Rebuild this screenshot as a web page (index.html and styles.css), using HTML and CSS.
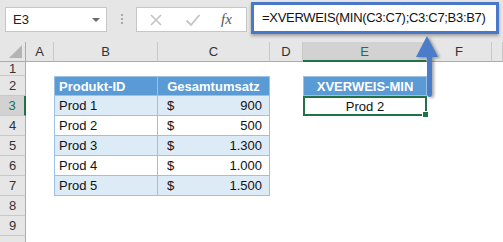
FILE: index.html
```html
<!DOCTYPE html>
<html lang="de">
<head>
  <meta charset="UTF-8">
  <title>XVERWEIS-MIN</title>
  <link rel="stylesheet" href="styles.css">
</head>
<body>
  <div class="app">
    <div class="toolbar">
      <div class="namebox">
        <span>E3</span>
        <span class="caret"></span>
      </div>
      <div class="dots"><i></i><i></i><i></i></div>
      <div class="buttons">
        <svg class="btn" width="14" height="14" viewBox="0 0 14 14">
          <path d="M2 2 L12 12 M12 2 L2 12" stroke="#c4c4c4" stroke-width="1.6" fill="none"/>
        </svg>
        <svg class="btn" width="16" height="14" viewBox="0 0 16 14">
          <path d="M1.5 7.5 L6 12 L14.5 2" stroke="#c4c4c4" stroke-width="1.8" fill="none"/>
        </svg>
        <span class="fx">fx</span>
      </div>
      <div class="formula">=XVERWEIS(MIN(C3:C7);C3:C7;B3:B7)</div>
    </div>

    <div class="sheet">
      <div class="hd corner">
        <svg width="13" height="13" viewBox="0 0 13 13"><path d="M13 0 L13 13 L0 13 Z" fill="#b4b4b4"/></svg>
      </div>
      <div class="hd">A</div>
      <div class="hd">B</div>
      <div class="hd">C</div>
      <div class="hd">D</div>
      <div class="hd sel">E</div>
      <div class="hd">F</div>
      <div class="hd"></div>

      <div class="rh">1</div>
      <div></div><div></div><div></div><div></div><div></div><div></div><div></div>

      <div class="rh">2</div>
      <div></div>
      <div class="t th first left">Produkt-ID</div>
      <div class="t th">Gesamtumsatz</div>
      <div></div>
      <div class="t th first">XVERWEIS-MIN</div>
      <div></div><div></div>

      <div class="rh sel">3</div>
      <div></div>
      <div class="t alt first">Prod 1</div>
      <div class="t alt money"><span>$</span><span>900</span></div>
      <div></div>
      <div class="active">Prod 2<span class="handle"></span></div>
      <div></div><div></div>

      <div class="rh">4</div>
      <div></div>
      <div class="t first">Prod 2</div>
      <div class="t money"><span>$</span><span>500</span></div>
      <div></div><div></div><div></div><div></div>

      <div class="rh">5</div>
      <div></div>
      <div class="t alt first">Prod 3</div>
      <div class="t alt money"><span>$</span><span>1.300</span></div>
      <div></div><div></div><div></div><div></div>

      <div class="rh">6</div>
      <div></div>
      <div class="t first">Prod 4</div>
      <div class="t money"><span>$</span><span>1.000</span></div>
      <div></div><div></div><div></div><div></div>

      <div class="rh">7</div>
      <div></div>
      <div class="t alt first">Prod 5</div>
      <div class="t alt money"><span>$</span><span>1.500</span></div>
      <div></div><div></div><div></div><div></div>

      <div class="rh">8</div>
      <div></div><div></div><div></div><div></div><div></div><div></div><div></div>

      <div class="rh">9</div>
      <div></div><div></div><div></div><div></div><div></div><div></div><div></div>

      <div class="rh"></div>
      <div></div><div></div><div></div><div></div><div></div><div></div><div></div>
    </div>

    <svg class="arrow" width="26" height="64" viewBox="0 0 26 64">
      <path d="M11 0 L22 21 L16 21 L16 58 Q16 61 13.5 61 Q11 61 11 58 L11 21 L0 21 Z" fill="#4a7cc9"/>
    </svg>
  </div>
</body>
</html>
```

FILE: styles.css
```css
body {
  margin: 0;
  background: #fff;
  font-family: "Liberation Sans", Arial, sans-serif;
}
.app {
  position: relative;
  width: 503px;
  height: 242px;
  overflow: hidden;
}
.toolbar {
  display: flex;
  align-items: flex-start;
  height: 42px;
  background: #e6e6e6;
  box-sizing: border-box;
}
.namebox {
  display: flex;
  align-items: center;
  justify-content: space-between;
  margin: 7px 0 0 5px;
  width: 102px;
  height: 25px;
  padding: 0 6px 0 7px;
  background: #fff;
  border: 1px solid #c6c6c6;
  box-sizing: border-box;
  font-size: 13px;
  color: #222;
}
.caret {
  width: 0;
  height: 0;
  border-left: 4px solid transparent;
  border-right: 4px solid transparent;
  border-top: 4px solid #6a6a6a;
}
.dots {
  display: flex;
  flex-direction: column;
  gap: 2px;
  margin: 14px 13px 0 14px;
}
.dots i {
  width: 2px;
  height: 2px;
  background: #a8a8a8;
}
.buttons {
  display: flex;
  align-items: center;
  margin-top: 7px;
  width: 111px;
  height: 25px;
  padding: 0 0 0 12px;
  gap: 22px;
  background: #fff;
  border: 1px solid #c6c6c6;
  box-sizing: border-box;
}
.fx {
  font-family: "Liberation Serif", serif;
  font-style: italic;
  font-size: 15px;
  color: #555;
  margin-left: -2px;
}
.formula {
  margin: 2px 0 0 4px;
  width: 248px;
  height: 32px;
  padding: 0 0 0 8px;
  line-height: 26px;
  background: #fff;
  border: 3px solid #4a78c8;
  box-sizing: border-box;
  box-shadow: 0 2px 3px rgba(0,0,0,0.3);
  font-size: 13px;
  letter-spacing: -0.3px;
  color: #111;
  white-space: nowrap;
}
.sheet {
  display: grid;
  grid-template-columns: 26px 28px 104px 112px 33px 124px 65px 11px;
  grid-template-rows: 20px 14px repeat(9, 20px);
  font-size: 13px;
  color: #111;
}
.hd {
  display: flex;
  align-items: center;
  justify-content: center;
  background: #e6e6e6;
  border-right: 1px solid #c8c8c8;
  border-bottom: 1px solid #ababab;
  box-sizing: border-box;
  color: #333;
}
.hd.corner {
  align-items: flex-end;
  justify-content: flex-end;
  padding: 0 3px 3px 0;
  border-right-color: #ababab;
}
.hd.sel {
  background: #d2d2d2;
  color: #217346;
  border-bottom: 2px solid #217346;
}
.rh {
  display: flex;
  align-items: center;
  justify-content: center;
  background: #e6e6e6;
  border-right: 1px solid #ababab;
  border-bottom: 1px solid #c8c8c8;
  box-sizing: border-box;
  color: #333;
}
.rh.sel {
  background: #d2d2d2;
  color: #217346;
  border-right: 2px solid #217346;
}
.t {
  display: flex;
  align-items: center;
  padding: 0 4px;
  border-right: 1px solid #9bc2e6;
  border-bottom: 1px solid #9bc2e6;
  box-sizing: border-box;
}
.t.first {
  border-left: 1px solid #9bc2e6;
  padding-left: 4px;
}
.th {
  justify-content: center;
  background: #5b9bd5;
  color: #fff;
  font-weight: bold;
  border-top: 1px solid #9bc2e6;
}
.th.left {
  justify-content: flex-start;
}
.alt {
  background: #ddebf7;
}
.money {
  justify-content: space-between;
  padding: 0 7px 0 9px;
}
.active {
  position: relative;
  display: flex;
  align-items: center;
  justify-content: center;
  border: 2px solid #217346;
  box-sizing: border-box;
}
.handle {
  position: absolute;
  right: -4px;
  bottom: -4px;
  width: 5px;
  height: 5px;
  background: #217346;
  border: 1px solid #fff;
}
.arrow {
  position: absolute;
  left: 416px;
  top: 36px;
  filter: drop-shadow(2px 1px 1.5px rgba(0,0,0,0.35));
}
```
